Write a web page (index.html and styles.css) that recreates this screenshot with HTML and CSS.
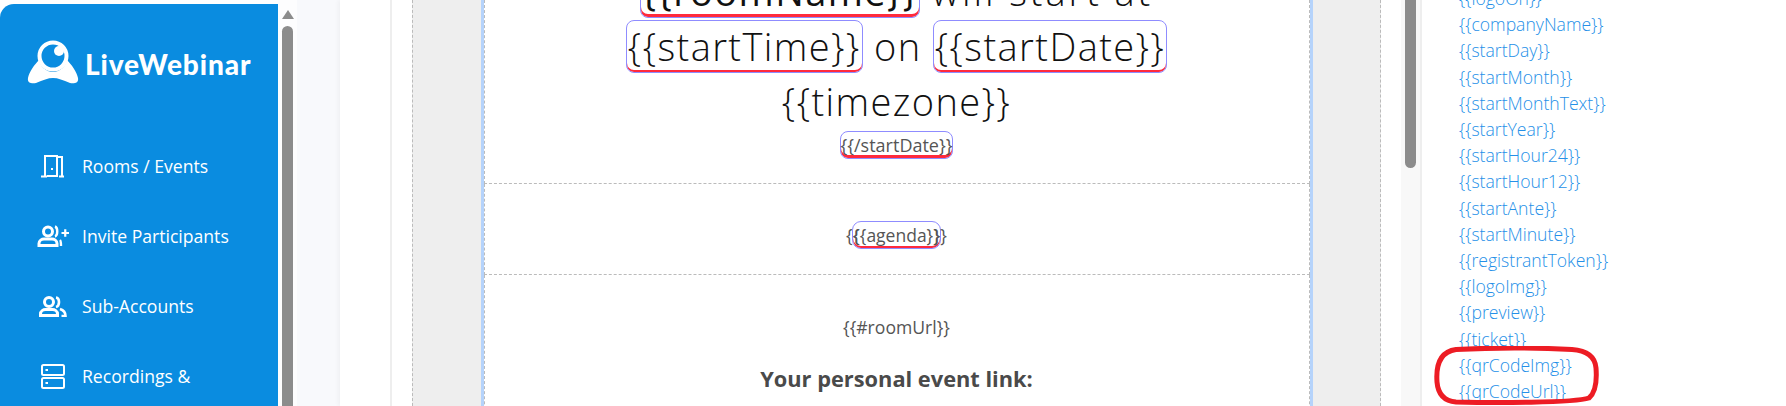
FILE: index.html
```html
<!DOCTYPE html>
<html lang="en">
<head>
    <meta charset="UTF-8">
    <title>LiveWebinar - Email template</title>
    <link rel="stylesheet" href="styles.css">
</head>
<body>
    <aside class="sidebar">
        <div class="logo">
            <svg class="logo-icon" width="52" height="44" viewBox="0 0 52 44">
                <circle cx="26" cy="16" r="13.5" fill="none" stroke="#fff" stroke-width="4"/>
                <circle cx="32" cy="11" r="5" fill="#fff"/>
                <path d="M12 20 C13 26 19 32 26 32 C33 32 39 26 40 20 C44 24 50 32 51 38 C52 43 47 44 43 43 C36 40 31 38 26 38 C21 38 16 40 9 43 C5 44 0 43 1 38 C2 32 8 24 12 20 Z" fill="#fff"/>
            </svg>
            <span class="logo-text">LiveWebinar</span>
        </div>
        <nav class="nav">
            <a class="nav-item">
                <span class="nav-icon">
                    <svg width="24" height="24" viewBox="0 0 24 24" fill="none" stroke="#fff" stroke-width="2">
                        <path d="M0 22.5h6M4 22V2h12v20h-10M16 3h5v19M18 22.5h5"/>
                        <path d="M10 15h2" stroke-width="2"/>
                    </svg>
                </span>
                Rooms / Events
            </a>
            <a class="nav-item">
                <span class="nav-icon">
                    <svg width="32" height="22" viewBox="0 0 32 22" fill="none" stroke="#fff" stroke-width="3">
                        <circle cx="11" cy="6.500" r="4.500"/>
                        <path d="M2 20.500v-2c0-3 3-4.500 5-4.500h8c2 0 5 1.500 5 4.500v2z"/>
                        <path d="M18 1.500c3 1 3 9 0 10M23 15c1 1 1 3 1 6" stroke-width="2.400"/>
                        <path d="M24.500 8h7.500M28.250 4.250v7.500" stroke-width="2.200"/>
                    </svg>
                </span>
                Invite Participants
            </a>
            <a class="nav-item">
                <span class="nav-icon">
                    <svg width="28" height="21" viewBox="0 0 28 21" fill="none" stroke="#fff" stroke-width="3">
                        <circle cx="10" cy="6" r="4.500"/>
                        <path d="M1.500 19.500v-1.500c0-3 3-4.500 5-4.500h7c2 0 5 1.500 5 4.500v1.500z"/>
                        <path d="M17 1.500c4 .5 4 8.500 0 9.500M21 13c3 1 5.500 3 5.500 7h-4" stroke-width="2.600"/>
                    </svg>
                </span>
                Sub-Accounts
            </a>
            <a class="nav-item">
                <span class="nav-icon">
                    <svg width="24" height="25" viewBox="0 0 24 25" fill="none" stroke="#fff" stroke-width="2">
                        <rect x="1" y="1" width="22" height="10" rx="1.500"/>
                        <rect x="1" y="14" width="22" height="10" rx="1.500"/>
                        <path d="M4.500 6h2.500M4.500 19h2.500"/>
                    </svg>
                </span>
                Recordings &amp;
            </a>
        </nav>
    </aside>

    <div class="scrollbar">
        <div class="scroll-arrow"></div>
        <div class="scroll-thumb"></div>
    </div>

    <div class="backdrop"></div>

    <main class="workspace">
        <div class="canvas">
            <div class="gutter"></div>
            <div class="email">
                <section class="block block-heading">
                    <h2 class="headline">
                        <span class="tag tag-room">{{roomName}}</span> <span class="wide">will start at</span><br>
                        <span class="tag">{{startTime}}</span> on <span class="tag">{{startDate}}</span><br>
                        {{timezone}}
                    </h2>
                    <p class="small-line"><span class="tag tag-small">{{/startDate}}</span></p>
                </section>
                <section class="block block-agenda">
                    <p>{{<span class="tag tag-agenda">{{agenda}}</span>}}</p>
                </section>
                <section class="block block-link">
                    <p>{{#roomUrl}}</p>
                    <p class="link-title">Your personal event link:</p>
                </section>
            </div>
            <div class="gutter"></div>
        </div>
    </main>

    <div class="side-gap">
        <div class="side-thumb"></div>
    </div>

    <aside class="variables">
        <ul class="var-list">
            <li>{{logoOn}}</li>
            <li>{{companyName}}</li>
            <li>{{startDay}}</li>
            <li>{{startMonth}}</li>
            <li>{{startMonthText}}</li>
            <li>{{startYear}}</li>
            <li>{{startHour24}}</li>
            <li>{{startHour12}}</li>
            <li>{{startAnte}}</li>
            <li>{{startMinute}}</li>
            <li>{{registrantToken}}</li>
            <li>{{logoImg}}</li>
            <li>{{preview}}</li>
            <li>{{ticket}}</li>
            <li>{{qrCodeImg}}</li>
            <li>{{qrCodeUrl}}</li>
        </ul>
        <!-- hand drawn marker from the screenshot -->
        <svg class="marker" width="166" height="60" viewBox="0 0 166 60" fill="none">
            <path d="M22 3.500 C60 1.500 110 2 138 3.500 C152 4.500 161 10 162 22 C163 35 161 47 155 52 C140 57 60 57 22 56 C10 55 4 48 3 36 C2 22 4 6 22 3.500 Z" stroke="#ed1c24" stroke-width="5"/>
        </svg>
    </aside>
</body>
</html>
```

FILE: styles.css
```css
* {
    margin: 0;
    padding: 0;
    box-sizing: border-box;
}

html, body {
    height: 406px;
    overflow: hidden;
}

body {
    display: flex;
    font-family: "Open Sans", sans-serif;
    background: white;
}

.sidebar {
    width: 278px;
    margin-top: 4px;
    flex-shrink: 0;
    background: #0a8ce0;
    border-top-left-radius: 14px;
    color: white;
}

.logo {
    display: flex;
    align-items: flex-start;
    padding: 36px 0 0 27px;
    height: 127px;
    gap: 6px;
}

.logo-text {
    font-family: Lato, sans-serif;
    font-weight: 900;
    font-size: 28px;
    letter-spacing: 0.9px;
    line-height: 34px;
    margin-top: 7px;
}

.nav {
    display: flex;
    flex-direction: column;
}

.nav-item {
    display: flex;
    align-items: center;
    height: 70px;
    font-size: 17.6px;
    padding-left: 82px;
    position: relative;
}

.nav-icon {
    position: absolute;
    left: 36px;
    width: 34px;
    display: flex;
    justify-content: center;
}

.scrollbar {
    width: 19px;
    flex-shrink: 0;
    padding: 10px 4px 0;
    background: #fdfdfe;
}

.scroll-arrow {
    width: 0;
    height: 0;
    margin: 0 auto 7px;
    border-left: 6px solid transparent;
    border-right: 6px solid transparent;
    border-bottom: 9px solid #8c8c8c;
}

.scroll-thumb {
    height: 500px;
    border-radius: 6px;
    background: #8c8c8c;
}

.backdrop {
    width: 43px;
    flex-shrink: 0;
    background: #f8f9fc;
}

.workspace {
    width: 1041px;
    flex-shrink: 0;
    display: flex;
    background: white;
    padding-left: 50px;
    box-shadow: -2px 0 4px rgba(0,0,0,0.04);
}

.canvas {
    width: 969px;
    flex-shrink: 0;
    display: flex;
    margin-left: 22px;
    background: #eeeeee;
    border-left: 1px dashed #bbb;
    border-right: 1px dashed #bbb;
    position: relative;
}

/* thin rule left of the canvas */
.canvas::before {
    content: "";
    position: absolute;
    left: -23px;
    top: 0;
    bottom: 0;
    width: 2px;
    background: #eeeeee;
}

.gutter {
    flex: 1;
}

.email {
    width: 832px;
    flex-shrink: 0;
    background: white;
    border-left: 3px solid #b5d3fb;
    border-right: 3px solid #b5d3fb;
    color: #555;
    text-align: center;
    font-size: 17.6px;
}

.block {
    border-left: 1px dashed #bbb;
    border-right: 1px dashed #bbb;
    border-bottom: 1px dashed #bbb;
}

.block-heading {
    height: 184px;
    overflow: hidden;
}

.headline {
    margin-top: -36px;
    font-weight: 300;
    font-size: 38px;
    line-height: 55px;
    letter-spacing: 1.4px;
    color: #111;
}

.wide {
    letter-spacing: 2.9px;
}

.tag {
    display: inline-block;
    line-height: 51px;
    padding: 0 1px;
    border: 1px solid #8f8cff;
    border-radius: 8px;
    box-shadow: inset 0 -2px 0 #ff2a3c;
}

.tag-room {
    font-weight: 500;
    box-shadow: inset 0 -3px 0 #ff2a3c;
}

.small-line {
    margin-top: 2px;
}

.tag-small {
    font-size: 18px;
    line-height: 26px;
    padding: 0;
    box-shadow: inset 0 -3px 0 #ff2a3c;
}

.block-agenda {
    height: 91px;
    padding-top: 12px;
    display: flex;
    align-items: center;
    justify-content: center;
}

.tag-agenda {
    font-size: 17.5px;
    line-height: 26px;
    padding: 0;
    margin: 0 -7px;
    border-radius: 9px;
}

.block-link {
    padding-top: 40px;
    border-bottom: none;
    height: 200px;
}

.link-title {
    margin-top: 25px;
    font-size: 21.8px;
    font-weight: 700;
    color: #4a4a4a;
}

.side-gap {
    width: 39px;
    flex-shrink: 0;
    padding-left: 24px;
    background: linear-gradient(90deg, white 20px, #f8f8f8 20px);
}

.side-thumb {
    width: 11px;
    height: 168px;
    border-radius: 0 0 6px 6px;
    background: #8c8c8c;
}

.variables {
    flex: 1;
    position: relative;
    border-left: 2px solid #eeeeee;
    padding-left: 37px;
}

.var-list {
    list-style: none;
    margin-top: -15px;
    font-size: 17.6px;
    font-weight: 300;
    line-height: 26.2px;
    color: #2590e8;
}

.marker {
    position: absolute;
    left: 12px;
    top: 346px;
}
```
